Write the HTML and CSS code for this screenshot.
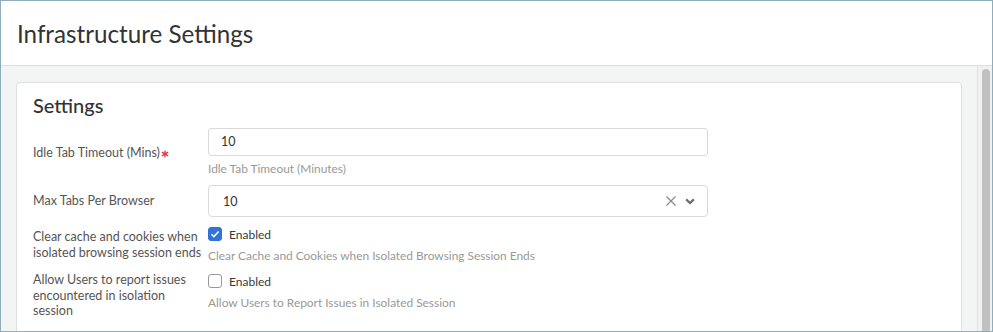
FILE: index.html
```html
<!DOCTYPE html>
<html lang="en">
<head>
<meta charset="utf-8">
<title>Infrastructure Settings</title>
<link rel="stylesheet" href="styles.css">
</head>
<body>
<div class="window">
  <header class="page-header">
    <h1 class="page-title">Infrastructure Settings</h1>
  </header>
  <div class="page-body">
    <main class="content">
      <section class="card">
        <h2 class="card-title">Settings</h2>
        <div class="form">
          <div class="form-label">Idle Tab Timeout (Mins)<svg class="req" viewBox="0 0 10 10" width="8" height="8" aria-hidden="true"><g stroke="#e0383e" stroke-width="1.7" stroke-linecap="butt"><line x1="5" y1="0.5" x2="5" y2="9.5"/><line x1="1.1" y1="2.75" x2="8.9" y2="7.25"/><line x1="1.1" y1="7.25" x2="8.9" y2="2.75"/></g></svg></div>
          <div class="field">
            <div class="input">10</div>
            <div class="help">Idle Tab Timeout (Minutes)</div>
          </div>

          <div class="form-label">Max Tabs Per Browser</div>
          <div class="field">
            <div class="select">
              <span class="select-value">10</span>
              <svg class="select-clear" viewBox="0 0 12 12" width="12" height="12" aria-hidden="true"><path d="M1.5 1.5 L10.5 10.5 M10.5 1.5 L1.5 10.5" stroke="#8a8a8a" stroke-width="1.2" fill="none"/></svg>
              <svg class="select-arrow" viewBox="0 0 10 7" width="10" height="7" aria-hidden="true"><path d="M1.2 1.4 L5 5 L8.8 1.4" stroke="#6b6b6b" stroke-width="2.2" fill="none" stroke-linejoin="miter"/></svg>
            </div>
          </div>

          <div class="form-label">Clear cache and cookies when isolated browsing session ends</div>
          <div class="field">
            <div class="check-row">
              <span class="checkbox checked"><svg viewBox="0 0 14 14" width="14" height="14" aria-hidden="true"><path d="M3.4 7.2 L5.9 9.6 L10.6 4.4" stroke="#fff" stroke-width="1.5" fill="none"/></svg></span>
              <span class="check-text">Enabled</span>
            </div>
            <div class="help">Clear Cache and Cookies when Isolated Browsing Session Ends</div>
          </div>

          <div class="form-label">Allow Users to report issues encountered in isolation session</div>
          <div class="field">
            <div class="check-row">
              <span class="checkbox"></span>
              <span class="check-text">Enabled</span>
            </div>
            <div class="help">Allow Users to Report Issues in Isolated Session</div>
          </div>
        </div>
      </section>
    </main>
    <div class="scrollbar"><div class="scroll-thumb"></div></div>
  </div>
</div>
</body>
</html>
```

FILE: styles.css
```css
* { box-sizing: border-box; }

html, body {
  margin: 0;
  padding: 0;
  background: #ffffff;
}

body {
  font-family: Lato, "Open Sans", "Liberation Sans", sans-serif;
  color: #333;
}

.window {
  width: 993px;
  height: 332px;
  border: 1px solid #8eaebd;
  display: flex;
  flex-direction: column;
  overflow: hidden;
}

.page-header {
  height: 65px;
  flex: none;
  background: #fff;
  border-bottom: 1px solid #dcdedf;
  display: flex;
  align-items: center;
  padding-left: 16px;
}

.page-title {
  margin: 0;
  font-size: 24.2px;
  font-weight: 400;
  color: #333;
  line-height: 29px;
  padding-top: 1px;
}

.page-body {
  flex: 1;
  display: flex;
  min-height: 0;
  background: #f3f4f4;
}

.content {
  flex: 1;
  padding: 16px 15px 0 15px;
  overflow: hidden;
}

.card {
  background: #fff;
  border: 1px solid #dedfe0;
  border-radius: 4px;
  padding: 10px 16px 20px 16px;
}

.card-title {
  margin: 0 0 11px 0;
  font-size: 20px;
  line-height: 24px;
  font-weight: 500;
  color: #333;
}

.form {
  display: grid;
  grid-template-columns: 175px 500px;
  row-gap: 8px;
  align-items: start;
}

.form-label {
  align-self: center;
  font-size: 12.5px;
  line-height: 15.5px;
  color: #555;
  padding-right: 3px;
}

.req {
  display: inline-block;
  vertical-align: -1px;
  margin-left: 1px;
}

.field {
  display: flex;
  flex-direction: column;
}

.input {
  height: 28px;
  border: 1px solid #d9dadb;
  border-radius: 3px;
  padding-left: 12px;
  font-size: 12.5px;
  line-height: 26px;
  color: #333;
}

.select {
  height: 32px;
  border: 1px solid #d9dadb;
  border-radius: 4px;
  padding: 0 12px 0 14px;
  display: flex;
  align-items: center;
  font-size: 12.5px;
  color: #333;
}

.select-value {
  flex: 1;
}

.select-clear {
  margin-right: 8px;
}

.help {
  margin-top: 5px;
  font-size: 11.9px;
  line-height: 16px;
  color: #999;
}

.check-row {
  height: 18px;
  display: flex;
  align-items: center;
}

.checkbox {
  width: 14px;
  height: 14px;
  border: 1px solid #999;
  border-radius: 3px;
  background: #fff;
  display: flex;
  align-items: center;
  justify-content: center;
  margin-right: 7px;
}

.checkbox.checked {
  background: #2f73d8;
  border-color: #2f73d8;
}

.checkbox svg {
  display: block;
  flex: none;
}

.check-text {
  font-size: 12px;
  color: #3a3a3a;
}

.scrollbar {
  width: 15px;
  flex: none;
  background: #f1f1f1;
  border-left: 1px solid #e2e2e2;
  padding: 3px 2px 0 4px;
}

.scroll-thumb {
  height: 100%;
  background: #c1c1c1;
  border-radius: 4px 4px 0 0;
}
```
